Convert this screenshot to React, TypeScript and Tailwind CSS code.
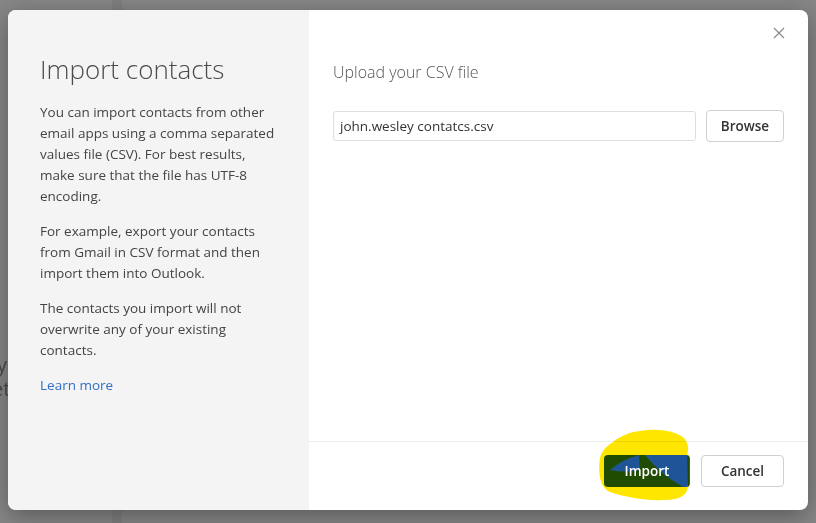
export default function App() {
  return (
    <div className="relative h-[523px] w-[816px] overflow-hidden bg-[#878787] font-['Open_Sans',sans-serif]">
      {/* page behind the overlay */}
      <div className="flex h-full">
        <div className="flex w-[112px] flex-col gap-[2px] pt-[354px] text-[20px] leading-[22px] text-[#4a4a4a]">
          <div className="-ml-[3px]">y</div>
          <div className="-ml-[8px]">et</div>
        </div>
        <div className="w-[10px] bg-black/[0.05]" />
        <div className="flex-1" />
      </div>

      {/* dialog */}
      <div className="absolute left-[8px] top-[10px] flex h-[500px] w-[800px] overflow-hidden rounded-[8px] bg-white shadow-[0_6px_26px_rgba(0,0,0,0.35)]">
        {/* left info panel */}
        <div className="w-[301px] bg-[#f4f4f4] pl-[32px] pr-[12px] pt-[41px] text-[#444]">
          <h1 className="text-[26px] font-light leading-[36px] text-[#4a4a4a]">Import contacts</h1>
          <div className="mt-[15px] text-[13.5px] leading-[21px]">
            <p>
              You can import contacts from other
              <br />
              email apps using a comma separated
              <br />
              values file (CSV). For best results,
              <br />
              make sure that the file has UTF-8
              <br />
              encoding.
            </p>
            <p className="mt-[14px]">
              For example, export your contacts
              <br />
              from Gmail in CSV format and then
              <br />
              import them into Outlook.
            </p>
            <p className="mt-[14px]">
              The contacts you import will not
              <br />
              overwrite any of your existing
              <br />
              contacts.
            </p>
            <p className="mt-[14px] text-[#2f6fc4]">Learn more</p>
          </div>
        </div>

        {/* right panel */}
        <div className="flex flex-1 flex-col">
          <div className="flex-1">
            <div className="flex justify-end pr-[13px] pt-[7px]">
              <button className="flex h-[32px] w-[32px] items-center justify-center text-[#8a8a8a]">
                <svg width="12" height="12" viewBox="0 0 12 12" fill="none" stroke="currentColor" strokeWidth="1.2">
                  <path d="M1 1l10 10M11 1L1 11" />
                </svg>
              </button>
            </div>
            <div className="px-[24px]">
              <h2 className="mt-[12px] text-[16px] font-light leading-[22px] text-[#555]">Upload your CSV file</h2>
              <div className="mt-[27px] flex items-center gap-[10px]">
                <div className="flex h-[30px] flex-1 items-center rounded-[3px] border border-[#dedede] px-[6px] text-[13.5px] text-[#333]">
                  john.wesley contatcs.csv
                </div>
                <button className="h-[32px] w-[78px] rounded-[4px] border border-[#cfcfcf] bg-white text-[13.5px] font-semibold text-[#333]">
                  Browse
                </button>
              </div>
            </div>
          </div>
          <div className="flex h-[69px] items-start justify-end gap-[11px] border-t border-[#ebebeb] pr-[24px] pt-[13px]">
            <button className="h-[32px] w-[86px] rounded-[4px] bg-[#1f5497] text-[13.5px] font-semibold">
              <span className="relative z-10 text-white">Import</span>
            </button>
            <button className="h-[32px] w-[83px] rounded-[4px] border border-[#cfcfcf] bg-white text-[13.5px] font-semibold text-[#333]">
              Cancel
            </button>
          </div>
        </div>
      </div>

      {/* yellow highlighter mark */}
      <svg className="pointer-events-none absolute inset-0 mix-blend-multiply" width="816" height="523" viewBox="0 0 816 523">
        <path
          fill="#ffe600"
          fillRule="evenodd"
          d="M613 442 C620 436 630 432 640 431 C655 428 675 430 684 438 C690 445 688 452 687 455 L688 487 C687 495 680 500 665 500 C645 501 625 497 610 492 C599 488 598 470 600 458 C602 450 607 446 613 442 Z
             M610 470 Q623 459 639 455 L640 470 Q626 473 610 470 Z
             M645 455 L689 455 L689 487 L683 487 Q660 474 645 455 Z"
        />
      </svg>
    </div>
  );
}
